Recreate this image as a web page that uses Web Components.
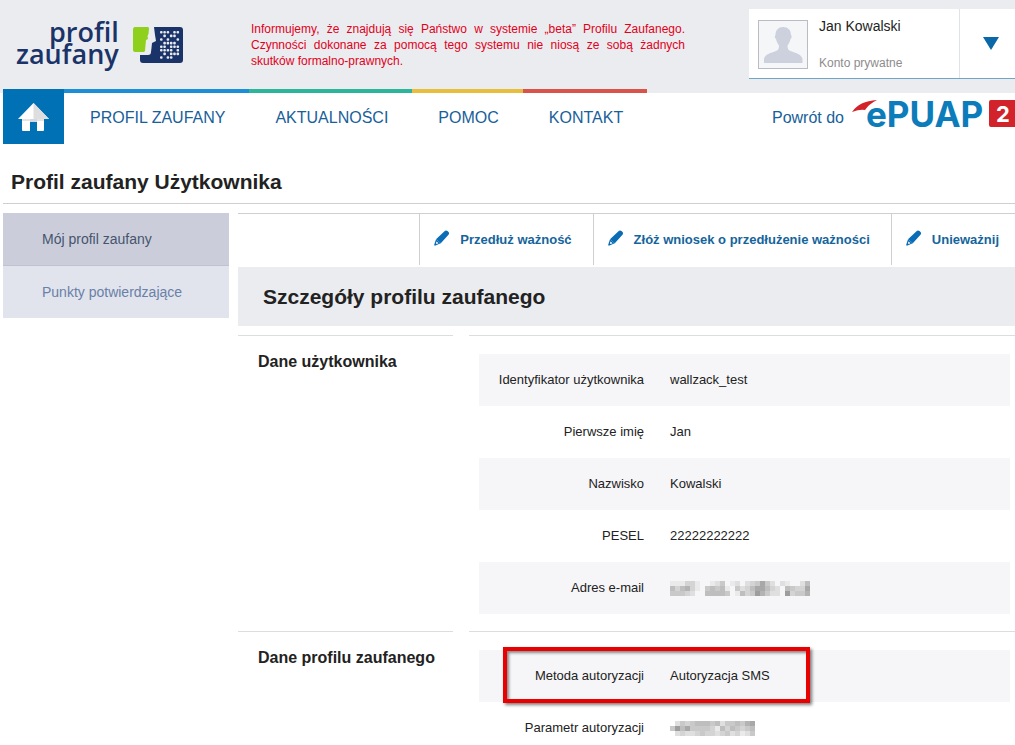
<!DOCTYPE html>
<html lang="pl">
<head>
<meta charset="utf-8">
<title>Profil zaufany</title>
<style>
html, body { margin: 0; background: #fff; }
body { font-family: "Liberation Sans", Arial, sans-serif; font-size: 13px; line-height: 16px; color: #222; overflow-x: hidden; }
</style>
</head>
<body>
<pz-page></pz-page>

<script>
const define = (name, html, after) => {
  const t = document.createElement('template');
  t.innerHTML = html;
  customElements.define(name, class extends HTMLElement {
    constructor() {
      super();
      this.attachShadow({ mode: 'open' }).append(t.content.cloneNode(true));
    }
    connectedCallback() { if (after) after(this, this.shadowRoot); }
  });
};

/* ---------- logos and icons ---------- */
define('pz-logo', `
<style>
:host { display: block; }
a { display: flex; gap: 14px; align-items: flex-start; text-decoration: none; color: #1a3368; }
.name { font: 600 27px/22px "Open Sans", "Noto Sans", sans-serif; text-align: right; }
svg { display: block; margin-top: 6px; }
</style>
<a href="#" aria-label="profil zaufany">
  <span class="name">profil<br>zaufany</span>
  <svg width="50" height="37" viewBox="0 0 50 37">
    <path fill="#8fd01d" d="M2 0h13q1 0 1 2l-.5 5-1 2 .5 3-2 1-.5 5-.5 6-1 1H2q-2 0-2-2V3Q0 0 2 0z"/>
    <path fill="#1a3368" d="M21 0h26q3 0 3 3v30q0 3-3 3H10q-3 0-3-3v-5h8q3 0 3-3l.5-4 .5-5 4-2-1-6z"/>
    <g class="dots" fill="#e9ecf1"></g>
  </svg>
</a>`, (el, r) => {
  const rows = ['111011', '010110', '101001', '011110', '110111', '111101', '010111', '101100'];
  let s = '';
  rows.forEach((row, y) => [...row].forEach((c, x) => {
    if (c === '1') s += `<rect x="${27 + x * 3.300}" y="${4 + y * 3.600}" width="2.600" height="2.600" rx="1"/>`;
  }));
  r.querySelector('.dots').innerHTML = s;
});

define('epuap-logo', `
<style>
:host { display: block; }
svg { display: block; }
text { font-family: Inter, "Liberation Sans", sans-serif; }
</style>
<svg width="163" height="55" viewBox="0 0 163 55" role="img" aria-label="ePUAP 2">
  <path fill="#d2232a" d="M0 23Q7 12 25 11q-8 4-12 10-5-1-13 2z"/>
  <text x="14" y="38" font-size="35" font-weight="700" fill="#0c7cba">ePUAP</text>
  <rect x="137" y="11" width="28" height="27" rx="2" fill="#d2232a"/>
  <text x="144" y="33" font-size="22" font-weight="700" fill="#fff">2</text>
</svg>`);

define('pencil-icon', `
<style>:host { display: block; flex: none; } svg { display: block; }</style>
<svg width="16" height="16" viewBox="0 0 16 16">
  <path fill="#0a6db5" d="M10.500 1.200q1.500-1.400 3.300.1 2 1.600.9 3.200L6.800 13.300 2 9.300z"/>
  <path fill="#0a6db5" d="M2 9.300 6.800 13.300.8 15.700.1 15z"/>
  <path fill="#fff" d="M2.600 11.600 4.500 13.200 2.700 13.900 1.900 13.200z"/>
</svg>`);

/* ---------- header ---------- */
define('user-box', `
<style>
:host { display: flex; background: #fff; border-bottom: 1px solid #6fa6c4; height: 69px; }
.avatar { flex: none; width: 48px; height: 47px; border: 1px solid #b9bcc3; margin: 11px 11px 0 9px; background: #f5f6f8; }
.avatar svg { display: block; }
.who { flex: 1; padding-top: 9px; }
.name { font-size: 14px; line-height: 16px; color: #222; }
.kind { font-size: 12px; line-height: 16px; color: #8c8c8c; margin-top: 21px; }
button { width: 56px; border: 0; border-left: 1px solid #dfe2e6; background: none; padding: 0 0 0 7px; display: grid; place-items: center; }
</style>
<div class="avatar"><svg width="48" height="47" viewBox="0 0 48 47"><path fill="#cdd1dd" d="M24 6c5 0 8 3 8 8 1 1 1 3-.5 4-.5 3-2 5-3 6.500 0 3 .5 4.500 3 5.500 5 2 11 3 12 8V42H5v-4c1-5 7-6 12-8 2.500-1 3-2.500 3-5.500-1-1.500-2.500-3.500-3-6.500-1.500-1-1.500-3-.5-4 0-5 3-8 7.500-8z"/></svg></div>
<div class="who"><div class="name"><slot name="name"></slot></div><div class="kind"><slot name="kind"></slot></div></div>
<button type="button" aria-label="Menu konta"><svg width="16" height="13"><path fill="#0a67a8" d="M0 0h16L8 13z"/></svg></button>`);

define('pz-header', `
<style>
:host { display: flex; background: #ebecf0; height: 89px; }
pz-logo { width: 235px; box-sizing: border-box; padding: 21px 0 0 16px; }
p { width: 434px; margin: 21px 0 0 16px; color: #e2001a; font-size: 12px; line-height: 16px; text-align: justify; }
user-box { width: 266px; margin: 9px 0 0 auto; }
</style>
<pz-logo></pz-logo>
<p>Informujemy, że znajdują się Państwo w systemie „beta” Profilu Zaufanego. Czynności dokonane za pomocą tego systemu nie niosą ze sobą żadnych skutków formalno-prawnych.</p>
<user-box><span slot="name">Jan Kowalski</span><span slot="kind">Konto prywatne</span></user-box>`);

define('pz-nav', `
<style>
:host { display: block; background: linear-gradient(#ebecf0 4px, #fff 4px); }
nav { display: flex; margin-left: 3px; height: 55px; }
a { color: #17609a; text-decoration: none; font-size: 16px; line-height: 20px; }
.home { width: 61px; background: #0071b5; display: grid; place-items: center; }
.item { border-top: 4px solid var(--c); padding: 15px 24px 0 26px; }
.back { margin-left: auto; display: flex; gap: 8px; }
.back span { padding-top: 19px; }
</style>
<nav>
  <a class="home" href="#" aria-label="Strona główna"><svg width="32" height="29" viewBox="0 0 32 29">
    <path fill="#fff" d="M15.500 1 0 17h4v11q0 1 1 1h7V18h7v11h6q1 0 1-1V17h5z"/>
    <path fill="#dedede" d="M15.500 1 31 17H15.500z"/><path fill="#e4e4e4" d="M4 17h8v2H4zM19 17h7v2h-7z"/><path fill="#d2d9e0" d="M12 17h7v3h-7z"/></svg></a>
  <a class="item" style="--c:#1b8fd6" href="#">PROFIL ZAUFANY</a>
  <a class="item" style="--c:#2bb59b" href="#">AKTUALNOŚCI</a>
  <a class="item" style="--c:#e8bf3c" href="#">POMOC</a>
  <a class="item" style="--c:#d9534a" href="#">KONTAKT</a>
  <a class="back" href="#"><span>Powrót do</span><epuap-logo></epuap-logo></a>
</nav>`);

/* ---------- content ---------- */
define('side-menu', `
<style>
:host { display: block; }
a { display: block; box-sizing: border-box; height: 52px; padding: 18px 0 0 39px; font-size: 14px; line-height: 16px; color: #6980a8; background: #e1e4ec; text-decoration: none; }
a.on { height: 53px; color: #46546f; background: #cbceda; border-bottom: 1px solid #bfc3d0; }
</style>
<nav><a class="on" href="#">Mój profil zaufany</a><a href="#">Punkty potwierdzające</a></nav>`);

define('action-button', `
<style>
:host { display: block; border-left: 1px solid #cfcfcf; }
button { display: flex; gap: 10px; align-items: center; height: 51px; border: 0; background: none; padding: 0 21px 0 14px; font: bold 13px/16px "Liberation Sans", Arial, sans-serif; color: #15649c; white-space: nowrap; }
pencil-icon { margin-bottom: 4px; }
</style>
<button type="button"><pencil-icon></pencil-icon><slot></slot></button>`);

define('hidden-value', `
<style>:host { display: block; } svg { display: block; }</style><svg height="15" shape-rendering="crispEdges"></svg>`, (el, r) => {
  const rows = el.getAttribute('shades').split('/');
  const svg = r.querySelector('svg');
  const px = 5;
  svg.setAttribute('width', rows[0].length * px);
  svg.setAttribute('aria-label', 'wartość ukryta');
  let s = '';
  rows.forEach((row, y) => [...row].forEach((c, x) => {
    const v = 245 - parseInt(c, 16) * 11;
    if (c !== '0') s += `<rect x="${x * px}" y="${y * px}" width="${px}" height="${px}" fill="rgb(${v},${v},${v})"/>`;
  }));
  svg.innerHTML = s;
});

define('data-section', `
<style>
:host { display: flex; gap: 16px; }
h3 { width: 215px; box-sizing: border-box; flex: none; margin: 0; padding: 16px 0 0 20px; border-top: 1px solid #dcdde0; font-size: 16px; line-height: 20px; color: #222; }
.body { flex: 1; padding: 18px 5px 17px 10px; border-top: 1px solid #dcdde0; }
</style>
<h3><slot name="title"></slot></h3><div class="body"><slot></slot></div>`);

define('data-table', `
<style>
:host { display: block; }
table { width: 100%; border-collapse: collapse; }
tr { height: 52px; }
tr:nth-child(odd) { background: #f6f6f8; }
th, td { padding: 0; font-weight: normal; font-size: 13px; line-height: 16px; }
th { width: 165px; text-align: right; }
td { padding-left: 26px; text-align: left; }
.mark { position: relative; }
.mark i { position: absolute; left: 24px; top: -3px; width: 299px; height: 48px; border: 4px solid #e90000; box-shadow: 2px 2px 3px rgba(0,0,0,.5), inset 2px 2px 3px rgba(0,0,0,.45); pointer-events: none; }
</style>
<table><tbody></tbody></table>`, (el, r) => {
  const body = r.querySelector('tbody');
  if (body.children.length) return;
  for (const line of el.querySelectorAll('data')) {
    const tr = body.insertRow();
    const th = document.createElement('th');
    th.scope = 'row';
    th.textContent = line.getAttribute('label');
    tr.append(th);
    const td = tr.insertCell();
    const shades = line.getAttribute('shades');
    if (shades) {
      const h = document.createElement('hidden-value');
      h.setAttribute('shades', shades);
      td.append(h);
    } else td.textContent = line.textContent;
    if (line.hasAttribute('marked')) {
      tr.className = 'mark';
      th.append(document.createElement('i'));
    }
  }
});

define('pz-page', `
<style>
:host { display: block; }
h1 { margin: 0 0 0 3px; padding: 25px 0 9px 8px; border-bottom: 1px solid #cfcfcf; font-size: 21px; line-height: 25px; color: #222; }
.cols { display: flex; gap: 9px; padding: 9px 0 0 3px; }
side-menu { width: 226px; flex: none; }
main { flex: 1; min-width: 0; }
.actions { display: flex; justify-content: flex-end; border-top: 1px solid #cfcfcf; margin-bottom: 2px; }
h2 { margin: 0 0 9px; padding: 17px 25px; background: #ebecf0; font-size: 21px; line-height: 25px; color: #222; }
.actions action-button:last-child { margin-right: -5px; }
</style>
<pz-header></pz-header>
<pz-nav></pz-nav>
<h1>Profil zaufany Użytkownika</h1>
<div class="cols">
  <side-menu></side-menu>
  <main>
    <div class="actions">
      <action-button>Przedłuż ważność</action-button>
      <action-button>Złóż wniosek o przedłużenie ważności</action-button>
      <action-button>Unieważnij</action-button>
    </div>
    <h2>Szczegóły profilu zaufanego</h2>
    <data-section><span slot="title">Dane użytkownika</span>
      <data-table>
        <data label="Identyfikator użytkownika">wallzack_test</data>
        <data label="Pierwsze imię">Jan</data>
        <data label="Nazwisko">Kowalski</data>
        <data label="PESEL">22222222222</data>
        <data label="Adres e-mail" shades="1113310012401202347420210025/5356310454510423577532054337/4443200555540153486422083446"></data>
      </data-table>
    </data-section>
    <data-section><span slot="title">Dane profilu zaufanego</span>
      <data-table>
        <data label="Metoda autoryzacji" marked>Autoryzacja SMS</data>
        <data label="Parametr autoryzacji" shades="02434555452445467/48574444315354345/02322343323423124"></data>
      </data-table>
    </data-section>
  </main>
</div>`);
</script>
</body>
</html>
